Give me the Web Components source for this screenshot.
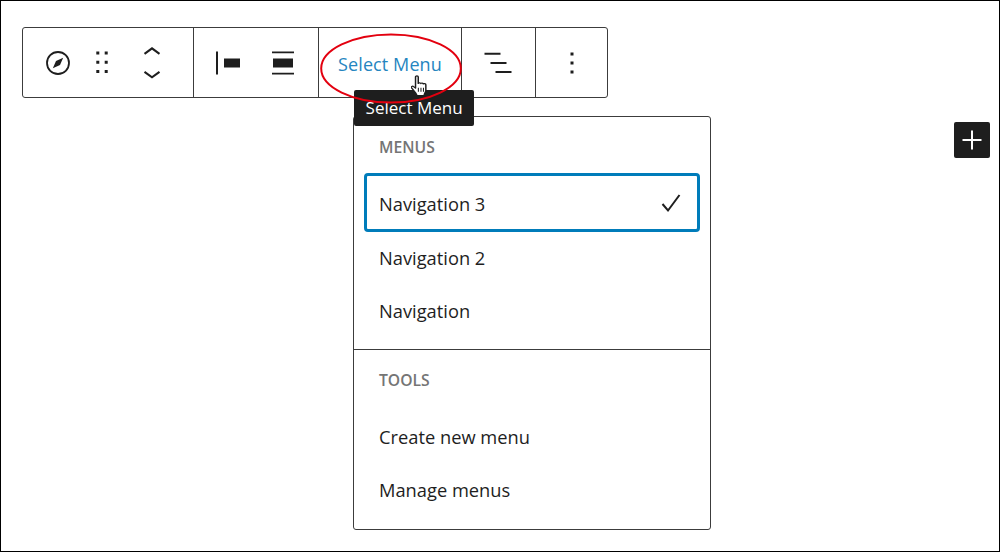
<!DOCTYPE html>
<html lang="en">
<head>
<meta charset="utf-8">
<title>Select Menu</title>
<style>
    html, body { margin: 0; padding: 0; background: #fff; }
    body { font-family: "Open Sans", "Noto Sans", sans-serif; color: #1e1e1e; }
</style>
</head>
<body>
<editor-frame>
    <block-toolbar slot="toolbar">
        <toolbar-group style="width:171px;padding-left:23px;justify-content:flex-start">
            <tool-icon name="compass"></tool-icon>
            <tool-icon name="drag" style="margin-left:20px"></tool-icon>
            <tool-icon name="mover" style="margin-left:26px"></tool-icon>
        </toolbar-group>
        <toolbar-group style="width:125px;padding-left:22px;justify-content:flex-start">
            <tool-icon name="alignLeft"></tool-icon>
            <tool-icon name="alignCenter" style="margin-left:31px"></tool-icon>
        </toolbar-group>
        <toolbar-group style="width:143px">
            <select-menu-button>Select Menu</select-menu-button>
        </toolbar-group>
        <toolbar-group style="width:74px">
            <tool-icon name="listView"></tool-icon>
        </toolbar-group>
        <toolbar-group style="width:71px" last>
            <tool-icon name="more"></tool-icon>
        </toolbar-group>
    </block-toolbar>
    <nav-menu slot="menu">
        <menu-group label="Menus">
            <menu-item selected>Navigation 3</menu-item>
            <menu-item>Navigation 2</menu-item>
            <menu-item>Navigation</menu-item>
        </menu-group>
        <menu-group label="Tools" divided>
            <menu-item>Create new menu</menu-item>
            <menu-item>Manage menus</menu-item>
        </menu-group>
    </nav-menu>
    <inserter-button slot="inserter"></inserter-button>
</editor-frame>

<script>
// art for the toolbar icons, all on a 24 box (some run a little past it, like the reference)
const ICONS = {
    compass: `<circle cx="12" cy="12" r="11" fill="none" stroke="currentColor" stroke-width="1.8"/>
        <path d="M17.200 6.800 14 14 6.800 17.200 10 10Z" fill="currentColor"/>`,
    drag: `<path d="M6.300 .5h3v3h-3zM14.700 .5h3v3h-3zM6.300 9.700h3v3h-3zM14.700 9.700h3v3h-3zM6.300 19h3v3h-3zM14.700 19h3v3h-3z" fill="currentColor"/>`,
    mover: `<path d="M4.500 2.800 12-2.700l7.500 5.500M4.500 20.800l7.500 5.500 7.500-5.500" fill="none" stroke="currentColor" stroke-width="2.100"/>`,
    alignLeft: `<path d="M0 .5h2v23H0zM8 7.500h16v9H8z" fill="currentColor"/>`,
    alignCenter: `<path d="M1 .5h22v1.800H1zM1 21.700h22v1.800H1zM2 7.500h20v9H2z" fill="currentColor"/>`,
    listView: `<path d="M-2.500 1.800h16v2h-16zM3.500 11h16v2h-16zM8.500 20h16v2h-16z" fill="currentColor"/>`,
    more: `<path d="M10.500 1.500h3v3h-3zM10.500 10.500h3v3h-3zM10.500 19.500h3v3h-3z" fill="currentColor"/>`
};

class EditorFrame extends HTMLElement {
    constructor() {
        super();
        this.attachShadow({ mode: 'open' });
        this.shadowRoot.innerHTML = `
            <style>
                :host {
                    display: block;
                    box-sizing: border-box;
                    width: 1000px;
                    height: 552px;
                    border: 1px solid #000;
                    padding: 26px 0 0 21px;
                }
                .lower {
                    display: flex;
                    align-items: flex-start;
                    padding: 18px 0 0 331px;
                }
                .side {
                    padding: 6px 0 0 243px;
                }
            </style>
            <slot name="toolbar"></slot>
            <div class="lower">
                <slot name="menu"></slot>
                <div class="side"><slot name="inserter"></slot></div>
            </div>
        `;
    }
}

class BlockToolbar extends HTMLElement {
    constructor() {
        super();
        this.attachShadow({ mode: 'open' });
        this.shadowRoot.innerHTML = `
            <style>
                :host {
                    display: flex;
                    box-sizing: border-box;
                    width: 586px;
                    height: 71px;
                    border: 1px solid #3c3c3c;
                    border-radius: 3px;
                }
            </style>
            <slot></slot>
        `;
    }
}

class ToolbarGroup extends HTMLElement {
    constructor() {
        super();
        this.attachShadow({ mode: 'open' });
        this.shadowRoot.innerHTML = `
            <style>
                :host {
                    display: flex;
                    box-sizing: border-box;
                    align-items: center;
                    justify-content: center;
                    border-right: 1px solid #3c3c3c;
                }
                :host([last]) { border-right: none; }
            </style>
            <slot></slot>
        `;
    }
}

class ToolIcon extends HTMLElement {
    constructor() {
        super();
        this.attachShadow({ mode: 'open' });
    }

    connectedCallback() {
        const art = ICONS[this.getAttribute('name')] || '';
        this.shadowRoot.innerHTML = `
            <style>
                :host {
                    display: block;
                    flex: none;
                    width: 24px;
                    height: 24px;
                    color: #1e1e1e;
                }
                svg { display: block; overflow: visible; }
            </style>
            <svg width="24" height="24" viewBox="0 0 24 24">${art}</svg>
        `;
    }
}

class SelectMenuButton extends HTMLElement {
    constructor() {
        super();
        this.attachShadow({ mode: 'open' });
        this.shadowRoot.innerHTML = `
            <style>
                :host {
                    display: block;
                    position: relative;
                    padding-top: 4px;
                    font-size: 18px;
                    letter-spacing: .1px;
                    line-height: 25px;
                    color: #2585bf;
                    white-space: nowrap;
                }
                .ring {
                    position: absolute;
                    left: -18px;
                    top: -15px;
                }
                .hand {
                    position: absolute;
                    left: 73px;
                    top: 27px;
                }
                .tip {
                    position: absolute;
                    left: 16px;
                    top: 42px;
                    width: 120px;
                    height: 36px;
                    background: #1e1e1e;
                    color: #fff;
                    border-radius: 2px;
                    font-size: 17px;
                    letter-spacing: 0;
                    line-height: 36px;
                    text-align: center;
                }
            </style>
            <slot></slot>
            <div class="tip">Select Menu</div>
            <svg class="ring" width="142" height="72" viewBox="0 0 142 72">
                <ellipse cx="71" cy="35.500" rx="69.800" ry="34" fill="none" stroke="#e3000f" stroke-width="2"/>
            </svg>
            <svg class="hand" width="17" height="22" viewBox="1 0 15 23.500" preserveAspectRatio="none">
                <path d="M5 2.200c0-1.600 2.400-1.600 2.400 0V9c0-.9 2.300-.9 2.300.2 0-.8 2.200-.8 2.200.4 0-.7 2.200-.6 2.200.7v6.200c0 1.200-.5 1.900-1 3l-.6 2.500H6.300l-1.300-3-3.500-5.300c-.7-1.300.8-2.300 1.800-1.300L5 14Z" fill="#fff" stroke="#1e1e1e" stroke-width="1.300" stroke-linejoin="round"/>
                <path d="M7.500 13.500v4.500M9.800 13.500v4.500M12 13.500v4.500" stroke="#1e1e1e" stroke-width=".9"/>
            </svg>
        `;
    }
}

class NavMenu extends HTMLElement {
    constructor() {
        super();
        this.attachShadow({ mode: 'open' });
        this.shadowRoot.innerHTML = `
            <style>
                :host {
                    display: block;
                    box-sizing: border-box;
                    width: 358px;
                    height: 414px;
                    border: 1px solid #3c3c3c;
                    border-radius: 3px;
                }
            </style>
            <slot></slot>
        `;
    }
}

class MenuGroup extends HTMLElement {
    constructor() {
        super();
        this.attachShadow({ mode: 'open' });
    }

    connectedCallback() {
        const label = this.getAttribute('label') || '';
        this.shadowRoot.innerHTML = `
            <style>
                :host {
                    display: block;
                    box-sizing: border-box;
                    height: 232px;
                    padding: 0 10px;
                }
                :host([divided]) {
                    height: 180px;
                    border-top: 1px solid #3c3c3c;
                }
                h3 {
                    margin: 0;
                    padding: 19px 0 0 15px;
                    height: 56px;
                    box-sizing: border-box;
                    font-size: 15.700px;
                    line-height: 22px;
                    font-weight: 600;
                    text-transform: uppercase;
                    color: #757575;
                }
                :host([divided]) h3 { height: 60px; }
            </style>
            <h3>${label}</h3>
            <slot></slot>
        `;
    }
}

class MenuItem extends HTMLElement {
    constructor() {
        super();
        this.attachShadow({ mode: 'open' });
        this.shadowRoot.innerHTML = `
            <style>
                :host {
                    display: flex;
                    box-sizing: border-box;
                    align-items: center;
                    justify-content: space-between;
                    height: 53px;
                    padding: 0 15px;
                    font-size: 18.300px;
                    color: #1e1e1e;
                }
                :host([selected]) {
                    height: 59px;
                    border: 3px solid #007cba;
                    border-radius: 4px;
                    padding: 2px 12px 0;
                    margin-bottom: -1px;
                }
                svg { display: none; margin-top: -2px; }
                :host([selected]) svg { display: block; }
            </style>
            <slot></slot>
            <svg width="24" height="24" viewBox="0 0 24 24">
                <path d="M1.500 13 7 19.500 18.500 4" fill="none" stroke="#1e1e1e" stroke-width="2"/>
            </svg>
        `;
    }
}

class InserterButton extends HTMLElement {
    constructor() {
        super();
        this.attachShadow({ mode: 'open' });
        this.shadowRoot.innerHTML = `
            <style>
                :host {
                    display: flex;
                    align-items: center;
                    justify-content: center;
                    width: 36px;
                    height: 36px;
                    background: #1e1e1e;
                    border-radius: 2px;
                }
            </style>
            <svg width="24" height="24" viewBox="0 0 24 24">
                <path d="M11 2.500h2V11h8.500v2H13v8.500h-2V13H2.500v-2H11Z" fill="#fff"/>
            </svg>
        `;
    }
}

customElements.define('editor-frame', EditorFrame);
customElements.define('block-toolbar', BlockToolbar);
customElements.define('toolbar-group', ToolbarGroup);
customElements.define('tool-icon', ToolIcon);
customElements.define('select-menu-button', SelectMenuButton);
customElements.define('nav-menu', NavMenu);
customElements.define('menu-group', MenuGroup);
customElements.define('menu-item', MenuItem);
customElements.define('inserter-button', InserterButton);
</script>
</body>
</html>
